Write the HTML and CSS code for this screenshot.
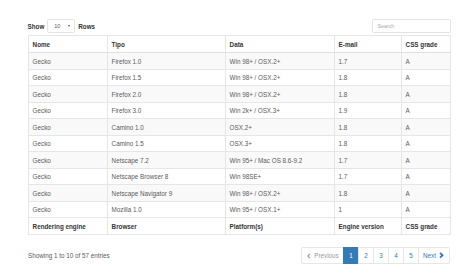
FILE: index.html
```html
<!DOCTYPE html>
<html>
<head>
<meta charset="utf-8">
<link rel="stylesheet" href="styles.css">
</head>
<body>
<div class="wrap">
  <div class="top">
    <div class="length">
      <span class="lbl">Show</span>
      <div class="select"><span>10</span><span class="caret"></span></div>
      <span class="lbl">Rows</span>
    </div>
    <div class="search">Search</div>
  </div>
  <table class="grid">
    <colgroup>
      <col class="c1"><col class="c2"><col class="c3"><col class="c4"><col class="c5">
    </colgroup>
    <thead>
      <tr><th>Nome</th><th>Tipo</th><th>Data</th><th>E-mail</th><th>CSS grade</th></tr>
    </thead>
    <tbody>
      <tr><td>Gecko</td><td>Firefox 1.0</td><td>Win 98+ / OSX.2+</td><td>1.7</td><td>A</td></tr>
      <tr><td>Gecko</td><td>Firefox 1.5</td><td>Win 98+ / OSX.2+</td><td>1.8</td><td>A</td></tr>
      <tr><td>Gecko</td><td>Firefox 2.0</td><td>Win 98+ / OSX.2+</td><td>1.8</td><td>A</td></tr>
      <tr><td>Gecko</td><td>Firefox 3.0</td><td>Win 2k+ / OSX.3+</td><td>1.9</td><td>A</td></tr>
      <tr><td>Gecko</td><td>Camino 1.0</td><td>OSX.2+</td><td>1.8</td><td>A</td></tr>
      <tr><td>Gecko</td><td>Camino 1.5</td><td>OSX.3+</td><td>1.8</td><td>A</td></tr>
      <tr><td>Gecko</td><td>Netscape 7.2</td><td>Win 95+ / Mac OS 8.6-9.2</td><td>1.7</td><td>A</td></tr>
      <tr><td>Gecko</td><td>Netscape Browser 8</td><td>Win 98SE+</td><td>1.7</td><td>A</td></tr>
      <tr><td>Gecko</td><td>Netscape Navigator 9</td><td>Win 98+ / OSX.2+</td><td>1.8</td><td>A</td></tr>
      <tr><td>Gecko</td><td>Mozilla 1.0</td><td>Win 95+ / OSX.1+</td><td>1</td><td>A</td></tr>
    </tbody>
    <tfoot>
      <tr><th>Rendering engine</th><th>Browser</th><th>Platform(s)</th><th>Engine version</th><th>CSS grade</th></tr>
    </tfoot>
  </table>
  <div class="bottom">
    <div class="info">Showing 1 to 10 of 57 entries</div>
    <ul class="pager">
      <li class="pg prev disabled"><svg class="chev" viewBox="0 0 10 10"><path d="M6.5 1.5 L3 5 L6.5 8.5" /></svg>Previous</li>
      <li class="pg active">1</li>
      <li class="pg">2</li>
      <li class="pg">3</li>
      <li class="pg">4</li>
      <li class="pg">5</li>
      <li class="pg next">Next<svg class="chev bold" viewBox="0 0 10 10"><path d="M3.2 1.2 L7 5 L3.2 8.8" /></svg></li>
    </ul>
  </div>
</div>
</body>
</html>
```

FILE: styles.css
```css
* { box-sizing: border-box; }
html, body { margin: 0; padding: 0; background: #fff; }
body {
  font-family: "Liberation Sans", Arial, Helvetica, sans-serif;
  font-size: 6.3px;
  color: #333;
  width: 474px;
  height: 276px;
  overflow: hidden;
}
.wrap {
  width: 423px;
  margin-left: 28px;
  padding-top: 19px;
}
.top {
  display: flex;
  justify-content: space-between;
  align-items: center;
  height: 14px;
  margin-bottom: 2px;
}
.length {
  display: flex;
  align-items: center;
  gap: 3px;
}
.lbl { font-weight: bold; color: #333; }
.length .lbl:first-child { margin-left: -0.5px; }
.select {
  width: 28px;
  height: 14px;
  border: 1px solid #e3e3e3;
  border-radius: 1.5px;
  display: flex;
  align-items: center;
  justify-content: space-between;
  padding: 0 4px 0 6px;
  font-size: 5.5px;
  color: #555;
}
.caret {
  width: 0;
  height: 0;
  border-left: 1.6px solid transparent;
  border-right: 1.6px solid transparent;
  border-top: 2px solid #555;
}
.search {
  width: 79px;
  height: 13.5px;
  border: 1px solid #e3e3e3;
  border-radius: 1.5px;
  font-size: 5.3px;
  color: #aaa;
  padding-left: 4.5px;
  display: flex;
  align-items: center;
}
.grid {
  width: 422px;
  table-layout: fixed;
  border-collapse: collapse;
  border: 1px solid #e2e2e2;
}
.c1 { width: 79px; }
.c2 { width: 118px; }
.c3 { width: 109px; }
.c4 { width: 67px; }
.c5 { width: 49px; }
.grid th, .grid td {
  border: 1px solid #e6e6e6;
  padding: 3.5px 3.6px 3px;
  line-height: 9px;
  text-align: left;
  white-space: nowrap;
  overflow: hidden;
}
.grid th {
  font-weight: bold;
  color: #333;
  height: 17px;
}
.grid td {
  color: #5a5a5a;
  height: 16.5px;
}
.grid thead th { border-bottom: 1px solid #e0e0e0; }
.grid tbody tr:nth-child(odd) td { background: #f9f9f9; }
.bottom {
  display: flex;
  justify-content: space-between;
  align-items: center;
  margin-top: 12px;
}
.info {
  color: #5a5a5a;
}
.pager {
  list-style: none;
  margin: 0 1px 0 0;
  padding: 0;
  display: flex;
  height: 17px;
}
.pg {
  height: 17px;
  width: 16px;
  border: 1px solid #e6e6e6;
  margin-left: -1px;
  padding: 0;
  display: flex;
  align-items: center;
  justify-content: center;
  color: #337ab7;
  background: #fff;
}
.pg.prev {
  width: 43px;
  margin-left: 0;
  border-radius: 2px 0 0 2px;
  color: #999;
  gap: 2px;
}
.pg.next {
  width: 32px;
  border-radius: 0 2px 2px 0;
  gap: 2.5px;
}
.pg.active {
  background: #337ab7;
  border-color: #337ab7;
  color: #fff;
}
.chev {
  width: 6px;
  height: 6px;
  fill: none;
  stroke: #999;
  stroke-width: 1.8;
}
.chev.bold {
  width: 6.5px;
  height: 6.5px;
  stroke: #337ab7;
  stroke-width: 2.8;
}
```
